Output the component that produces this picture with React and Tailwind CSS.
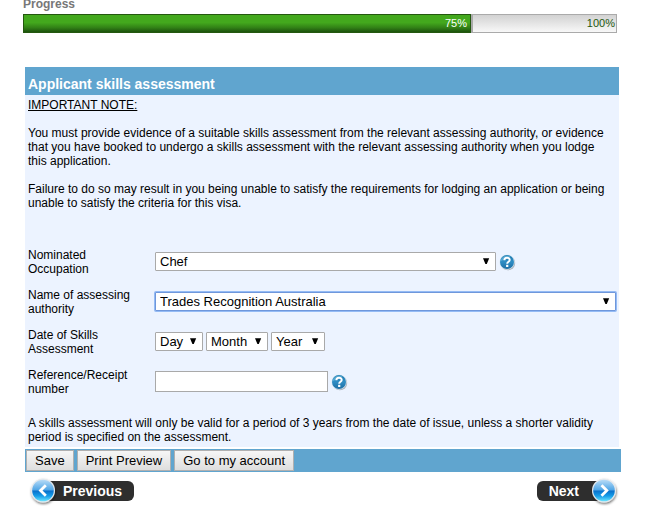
import { useState } from 'react'

const HelpIcon = ({ label }) => (
  <button type="button" aria-label={label} className="w-4 h-[17px] pt-px ml-[3px] shrink-0">
    <svg className="w-4 h-4 overflow-visible" viewBox="0 0 16 16">
      <defs>
        <linearGradient id="help" x1="0" y1="0" x2="0" y2="1">
          <stop offset="0" stopColor="#1f78ad" />
          <stop offset="0.5" stopColor="#2f8dc4" />
          <stop offset="1" stopColor="#1f6ea3" />
        </linearGradient>
      </defs>
      <circle cx="8.9" cy="9" r="7.3" fill="#8b9299" opacity="0.65" />
      <circle cx="8" cy="8" r="7.6" fill="#dcebf5" />
      <circle cx="8" cy="8" r="7" fill="url(#help)" />
      <path d="M1.6 7.5A6.4 6.4 0 0 1 12 3Q7 4 1.6 7.5Z" fill="#62b3dc" opacity="0.7" />
      <path d="M5.4 6.2C5.4 3 10.7 3 10.7 6C10.7 7.9 8.2 7.6 8.2 9.8" fill="none" stroke="#fff" strokeWidth="2" />
      <rect x="7.1" y="10.8" width="2.2" height="2.2" fill="#fff" />
    </svg>
  </button>
)

const SelectBox = ({ id, label, options, className = '', active = false }) => {
  const [value, setValue] = useState(options[0])

  return (
    <div className={`relative ${className}`}>
      <select
        id={id}
        aria-label={label}
        value={value}
        onChange={(e) => setValue(e.target.value)}
        className={`block w-full h-[19px] pl-1 pr-4 appearance-none bg-white border rounded-[1px] text-[13px] leading-4 outline-none ${
          active ? 'border-[#6f97db] ring-1 ring-[#94bbf5]' : 'border-[#a9a9a9]'
        }`}
      >
        {options.map(option => (
          <option key={option}>{option}</option>
        ))}
      </select>
      <svg className="absolute right-[6px] top-[6px] w-[7px] h-[7px] pointer-events-none" viewBox="0 0 7 7">
        <path d="M0 0.3H6.2L3.8 6H2.4Z" fill="#000" />
      </svg>
    </div>
  )
}

const Field = ({ id, label, children }) => (
  <div className="flex h-7">
    <label htmlFor={id} className="w-[127px] pr-5 shrink-0">{label}</label>
    <div className="flex flex-1 items-center min-w-0 pb-px">{children}</div>
  </div>
)

const FormButton = ({ children }) => (
  <button
    type="button"
    className="h-[21px] px-2 border border-[#b0b0b0] bg-linear-to-b from-[#f6f6f6] to-[#dedede] text-[13px] leading-[19px] whitespace-nowrap"
  >
    {children}
  </button>
)

const ArrowBall = ({ id, d }) => (
  <svg className="relative w-[26px] h-[26px] overflow-visible" viewBox="0 0 26 26">
    <defs>
      <linearGradient id={id} x1="0" y1="0" x2="0" y2="1">
        <stop offset="0" stopColor="#b9dcf7" />
        <stop offset="0.48" stopColor="#4ea5e6" />
        <stop offset="0.52" stopColor="#0870cb" />
        <stop offset="0.75" stopColor="#169de8" />
        <stop offset="1" stopColor="#6be4ff" />
      </linearGradient>
      <filter id={`${id}-shadow`} x="-20%" y="-20%" width="150%" height="150%">
        <feDropShadow dx="0.5" dy="1.5" stdDeviation="0.9" floodColor="#000" floodOpacity="0.55" />
      </filter>
    </defs>
    <circle cx="13" cy="12.5" r="12" fill="#e6eaee" filter={`url(#${id}-shadow)`} />
    <circle cx="13" cy="12.5" r="10.8" fill={`url(#${id})`} />
    <path d={d} fill="none" stroke="#fff" strokeWidth="2.8" />
  </svg>
)

const App = () => {
  const [reference, setReference] = useState('')

  return (
    <div className="min-h-screen bg-white pl-[23px] pr-[33px] font-['Liberation_Sans',Arial,sans-serif] text-xs leading-[14px] text-black">
      {/* Progress */}
      <div className="pr-1">
        <h2 className="h-[14px] leading-2 font-bold text-[#777]">Progress</h2>
        <div className="flex h-[19px] border border-[#aaa] bg-linear-to-b from-[#d2d2d2] to-[#f8f8f8] text-[11px] leading-[17px]">
          <div className="w-[calc(75%+4px)] -m-px mr-0 pr-[3px] border border-[#24580f] bg-linear-to-b from-[#43a81d] from-45% via-[#318016] via-75% to-[#1d520d] text-right text-white">
            75%
          </div>
          <div className="flex-1 pr-px border-l-2 border-[#aaa] text-right text-[#24580f]">100%</div>
        </div>
      </div>

      {/* Skills form */}
      <form className="mt-[34px] ml-[2px]" onSubmit={(e) => e.preventDefault()}>
        <div className="mr-[2px] bg-[#ecf3ff]">
          <h1 className="pt-[9px] pb-[3px] px-[3px] bg-[#60a5cf] text-sm leading-4 font-bold text-white">
            Applicant skills assessment
          </h1>
          <div className="p-[3px]">
            <p className="underline">IMPORTANT NOTE:</p>
            <p className="mt-[14px]">
              You must provide evidence of a suitable skills assessment from the relevant assessing authority, or evidence
              that you have booked to undergo a skills assessment with the relevant assessing authority when you lodge
              this application.
            </p>
            <p className="mt-[14px]">
              Failure to do so may result in you being unable to satisfy the requirements for lodging an application or being
              unable to satisfy the criteria for this visa.
            </p>

            <div className="flex flex-col gap-3 mt-[38px]">
              <Field id="occupation" label="Nominated Occupation">
                <SelectBox id="occupation" options={['Chef', 'Cook', 'Baker']} className="w-[341px]" />
                <HelpIcon label="Help with nominated occupation" />
              </Field>
              <Field id="authority" label="Name of assessing authority">
                <SelectBox id="authority" options={['Trades Recognition Australia', 'VETASSESS']} className="flex-1" active />
              </Field>
              <Field id="day" label="Date of Skills Assessment">
                <div className="flex gap-[3px]">
                  <SelectBox id="day" options={['Day', '1', '2', '3']} className="w-12" />
                  <SelectBox id="month" label="Month" options={['Month', 'January', 'February']} className="w-[62px]" />
                  <SelectBox id="year" label="Year" options={['Year', '2016', '2017']} className="w-[54px]" />
                </div>
              </Field>
              <Field id="reference" label="Reference/Receipt number">
                <input
                  id="reference"
                  type="text"
                  value={reference}
                  onChange={(e) => setReference(e.target.value)}
                  className="w-[173px] h-[21px] px-1 bg-white border border-[#a9a9a9] text-[13px]"
                />
                <HelpIcon label="Help with reference number" />
              </Field>
            </div>

            <p className="mt-5">
              A skills assessment will only be valid for a period of 3 years from the date of issue, unless a shorter validity
              period is specified on the assessment.
            </p>
          </div>
        </div>

        <div className="flex gap-[3px] mt-[2px] p-px bg-[#60a5cf]">
          <FormButton>Save</FormButton>
          <FormButton>Print Preview</FormButton>
          <FormButton>Go to my account</FormButton>
        </div>
      </form>

      {/* Page navigation */}
      <nav className="flex justify-between mt-[6px] pl-[7px] pr-1 text-sm font-bold text-white">
        <a href="#previous" className="flex items-center">
          <ArrowBall id="ball-prev" d="M15.8 7.2L10.5 12.5L15.8 17.8" />
          <span className="-ml-3 pl-[19px] pr-3 h-5 leading-5 rounded-md bg-[#2e2e2e]">Previous</span>
        </a>
        <a href="#next" className="flex items-center">
          <span className="-mr-3 pl-3 pr-6 h-5 leading-5 rounded-md bg-[#2e2e2e]">Next</span>
          <ArrowBall id="ball-next" d="M10.5 7.2L15.8 12.5L10.5 17.8" />
        </a>
      </nav>
    </div>
  )
}

export default App
